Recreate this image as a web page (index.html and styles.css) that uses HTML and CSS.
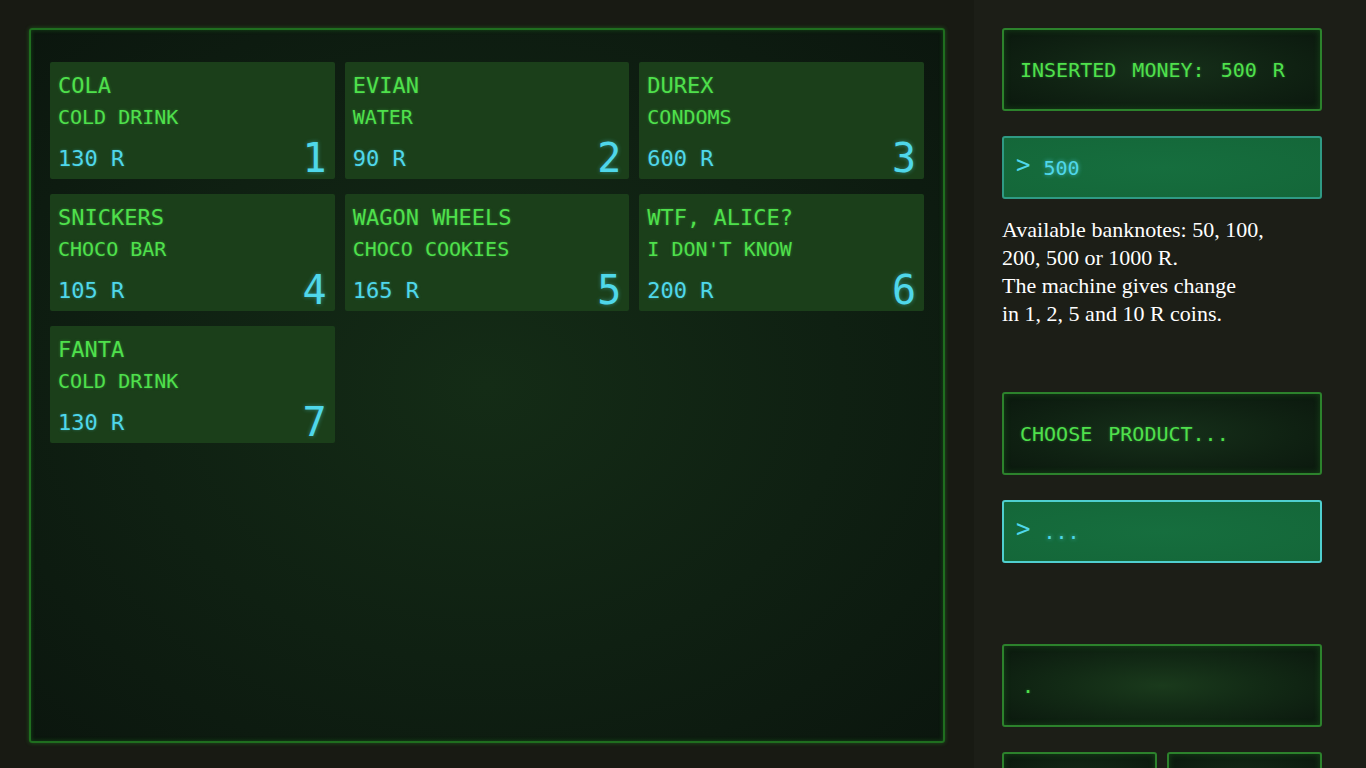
FILE: index.html
```html
<!DOCTYPE html>
<html lang="en">
<head>
<meta charset="utf-8">
<title>Vending machine</title>
<link rel="stylesheet" href="styles.css">
</head>
<body>
<div class="app">
  <main class="main">
    <section class="showcase">
      <div class="grid">
        <div class="card">
          <div class="name">COLA</div>
          <div class="kind">COLD DRINK</div>
          <div class="bottom"><span class="price">130 R</span><span class="num">1</span></div>
        </div>
        <div class="card">
          <div class="name">EVIAN</div>
          <div class="kind">WATER</div>
          <div class="bottom"><span class="price">90 R</span><span class="num">2</span></div>
        </div>
        <div class="card">
          <div class="name">DUREX</div>
          <div class="kind">CONDOMS</div>
          <div class="bottom"><span class="price">600 R</span><span class="num">3</span></div>
        </div>
        <div class="card">
          <div class="name">SNICKERS</div>
          <div class="kind">CHOCO BAR</div>
          <div class="bottom"><span class="price">105 R</span><span class="num">4</span></div>
        </div>
        <div class="card">
          <div class="name">WAGON WHEELS</div>
          <div class="kind">CHOCO COOKIES</div>
          <div class="bottom"><span class="price">165 R</span><span class="num">5</span></div>
        </div>
        <div class="card">
          <div class="name">WTF, ALICE?</div>
          <div class="kind">I DON'T KNOW</div>
          <div class="bottom"><span class="price">200 R</span><span class="num">6</span></div>
        </div>
        <div class="card">
          <div class="name">FANTA</div>
          <div class="kind">COLD DRINK</div>
          <div class="bottom"><span class="price">130 R</span><span class="num">7</span></div>
        </div>
      </div>
    </section>
  </main>
  <aside class="side">
    <div class="screen"><span class="screen-text">INSERTED MONEY: 500 R</span></div>
    <div class="input input-money"><span class="prompt">&gt;</span><span class="value">500</span></div>
    <p class="info">Available banknotes: 50, 100,<br>200, 500 or 1000 R.<br>The machine gives change<br>in 1, 2, 5 and 10 R coins.</p>
    <div class="screen screen-choose"><span class="screen-text">CHOOSE PRODUCT...</span></div>
    <div class="input input-active"><span class="prompt">&gt;</span><span class="value">...</span></div>
    <div class="screen screen-out"><span class="screen-text">.</span></div>
    <div class="buttons">
      <div class="screen btn"></div>
      <div class="screen btn"></div>
    </div>
    <div class="buttons">
      <div class="screen btn"></div>
      <div class="screen btn"></div>
    </div>
  </aside>
</div>
</body>
</html>
```
FILE: styles.css
```css
html, body {
  margin: 0;
  padding: 0;
}
body {
  background: #181a13;
  font-family: "DejaVu Sans Mono", monospace;
}
.app {
  display: flex;
  align-items: stretch;
  min-height: 1116px;
}
.main {
  width: 974px;
  flex: none;
  background: #181a13;
  padding: 28px 0 0 29px;
  box-sizing: border-box;
}
.showcase {
  width: 916px;
  height: 715px;
  box-sizing: border-box;
  border: 2px solid #1f6e1f;
  border-radius: 3px;
  box-shadow: 0 0 4px rgba(40, 160, 40, 0.45), inset 0 0 4px rgba(40, 160, 40, 0.35);
  background: radial-gradient(ellipse at 50% 50%, #142c16 0%, #0f2012 55%, #0b160e 100%);
  padding: 32px 19px 0 19px;
}
.grid {
  display: grid;
  grid-template-columns: repeat(3, 1fr);
  column-gap: 10px;
  row-gap: 15px;
}
.card {
  height: 117px;
  box-sizing: border-box;
  background: #1b3f1a;
  border-radius: 2px;
  padding: 10px 8px 1px 8px;
  display: flex;
  flex-direction: column;
}
.name {
  font-size: 22px;
  line-height: 28px;
  color: #4fe04c;
  text-shadow: 0 0 3px rgba(80, 230, 80, 0.35);
  white-space: nowrap;
}
.kind {
  font-size: 20px;
  line-height: 28px;
  margin-top: 3px;
  color: #4fe04c;
  text-shadow: 0 0 3px rgba(80, 230, 80, 0.35);
  white-space: nowrap;
}
.bottom {
  margin-top: auto;
  display: flex;
  justify-content: space-between;
  align-items: flex-end;
}
.price {
  font-size: 22px;
  line-height: 28px;
  margin-bottom: 5px;
  color: #4fd7ea;
  text-shadow: 0 0 3px rgba(80, 215, 235, 0.35);
}
.num {
  font-size: 40px;
  line-height: 40px;
  color: #4fd7ea;
  text-shadow: 0 0 4px rgba(80, 215, 235, 0.45);
}

.side {
  flex: 1;
  background: #1c1e17;
  padding: 28px 28px 28px 28px;
  box-sizing: border-box;
  display: flex;
  flex-direction: column;
}
.screen {
  width: 320px;
  height: 83px;
  box-sizing: border-box;
  border: 2px solid #2c822c;
  border-radius: 3px;
  box-shadow: inset 0 0 6px rgba(40, 150, 40, 0.35);
  background: radial-gradient(ellipse at 50% 50%, #16301a 0%, #0f2112 60%, #0b180e 100%);
  display: flex;
  align-items: center;
  padding: 0 16px;
}
.screen-text {
  font-size: 20px;
  color: #4fe04c;
  word-spacing: 4px;
  text-shadow: 0 0 3px rgba(80, 230, 80, 0.35);
}
.input {
  margin-top: 25px;
  width: 320px;
  height: 63px;
  box-sizing: border-box;
  border: 2px solid #2f9a84;
  border-radius: 3px;
  background: radial-gradient(ellipse at 50% 50%, #166e3e 0%, #146739 100%);
  display: flex;
  align-items: center;
  padding: 0 12px;
  color: #4fd7ea;
  font-size: 20px;
}
.input-active {
  border-color: #4fcfcf;
}
.prompt {
  font-size: 24px;
  margin-right: 13px;
  margin-top: -5px;
}
.value {
  text-shadow: 0 0 4px rgba(80, 215, 235, 0.7);
}
.info {
  margin: 17px 0 0 0;
  font-family: "Liberation Serif", "Times New Roman", serif;
  font-size: 22px;
  line-height: 28px;
  color: #ffffff;
  white-space: nowrap;
}
.screen-choose {
  margin-top: 64px;
}
.screen-out {
  margin-top: 81px;
  background: radial-gradient(ellipse at 50% 50%, #1a3a1c 0%, #122a15 45%, #0b180e 100%);
}
.screen-out .screen-text {
  padding-left: 2px;
  font-size: 20px;
}
.buttons {
  margin-top: 25px;
  width: 320px;
  display: flex;
  gap: 10px;
}
.btn {
  flex: 1;
  width: auto;
  height: 83px;
}
```
